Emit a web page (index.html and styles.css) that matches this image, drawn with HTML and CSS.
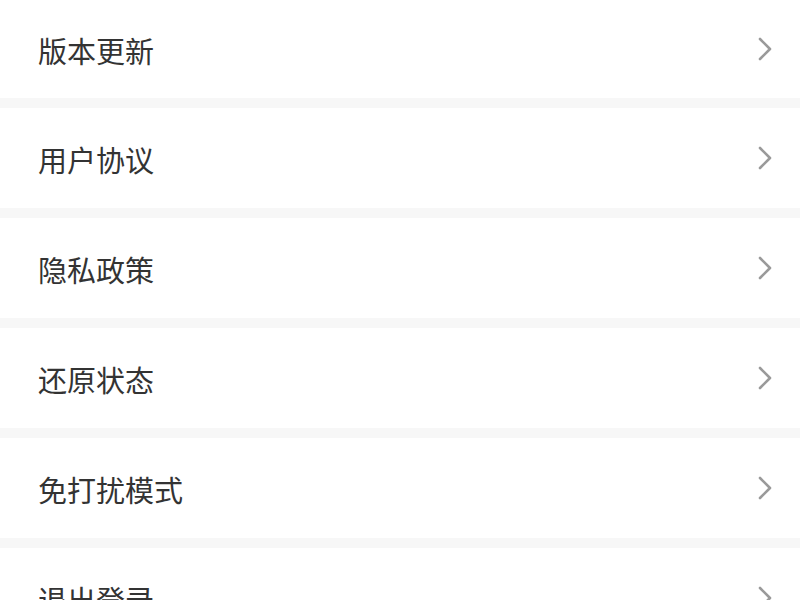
FILE: index.html
```html
<!DOCTYPE html>
<html lang="zh-CN">
<head>
<meta charset="utf-8">
<title>设置</title>
<link rel="stylesheet" href="styles.css">
</head>
<body>
<ul class="menu">
  <li class="item first"><span class="label">版本更新</span><svg class="chev" viewBox="0 0 16 24" width="16" height="24"><path d="M3 2 L13 12 L3 22" fill="none" stroke="#9a9a9a" stroke-width="2.6" stroke-linecap="round" stroke-linejoin="round"/></svg></li>
  <li class="item"><span class="label">用户协议</span><svg class="chev" viewBox="0 0 16 24" width="16" height="24"><path d="M3 2 L13 12 L3 22" fill="none" stroke="#9a9a9a" stroke-width="2.6" stroke-linecap="round" stroke-linejoin="round"/></svg></li>
  <li class="item"><span class="label">隐私政策</span><svg class="chev" viewBox="0 0 16 24" width="16" height="24"><path d="M3 2 L13 12 L3 22" fill="none" stroke="#9a9a9a" stroke-width="2.6" stroke-linecap="round" stroke-linejoin="round"/></svg></li>
  <li class="item"><span class="label">还原状态</span><svg class="chev" viewBox="0 0 16 24" width="16" height="24"><path d="M3 2 L13 12 L3 22" fill="none" stroke="#9a9a9a" stroke-width="2.6" stroke-linecap="round" stroke-linejoin="round"/></svg></li>
  <li class="item"><span class="label">免打扰模式</span><svg class="chev" viewBox="0 0 16 24" width="16" height="24"><path d="M3 2 L13 12 L3 22" fill="none" stroke="#9a9a9a" stroke-width="2.6" stroke-linecap="round" stroke-linejoin="round"/></svg></li>
  <li class="item"><span class="label">退出登录</span><svg class="chev" viewBox="0 0 16 24" width="16" height="24"><path d="M3 2 L13 12 L3 22" fill="none" stroke="#9a9a9a" stroke-width="2.6" stroke-linecap="round" stroke-linejoin="round"/></svg></li>
</ul>
</body>
</html>
```

FILE: styles.css
```css
html, body {
  margin: 0;
  padding: 0;
  background: #f7f7f7;
  font-family: "Noto Sans CJK SC", "Noto Sans", sans-serif;
}

.menu {
  list-style: none;
  margin: 0;
  padding: 0;
  display: flex;
  flex-direction: column;
  gap: 10px;
}

.item {
  height: 100px;
  background: #ffffff;
  display: flex;
  align-items: center;
  justify-content: space-between;
  padding: 2px 27px 0 38px;
  box-sizing: border-box;
}

.item.first {
  height: 98px;
}

.label {
  font-size: 29px;
  color: #333333;
  line-height: 1;
}

.chev {
  display: block;
  margin-top: -3px;
}
```
